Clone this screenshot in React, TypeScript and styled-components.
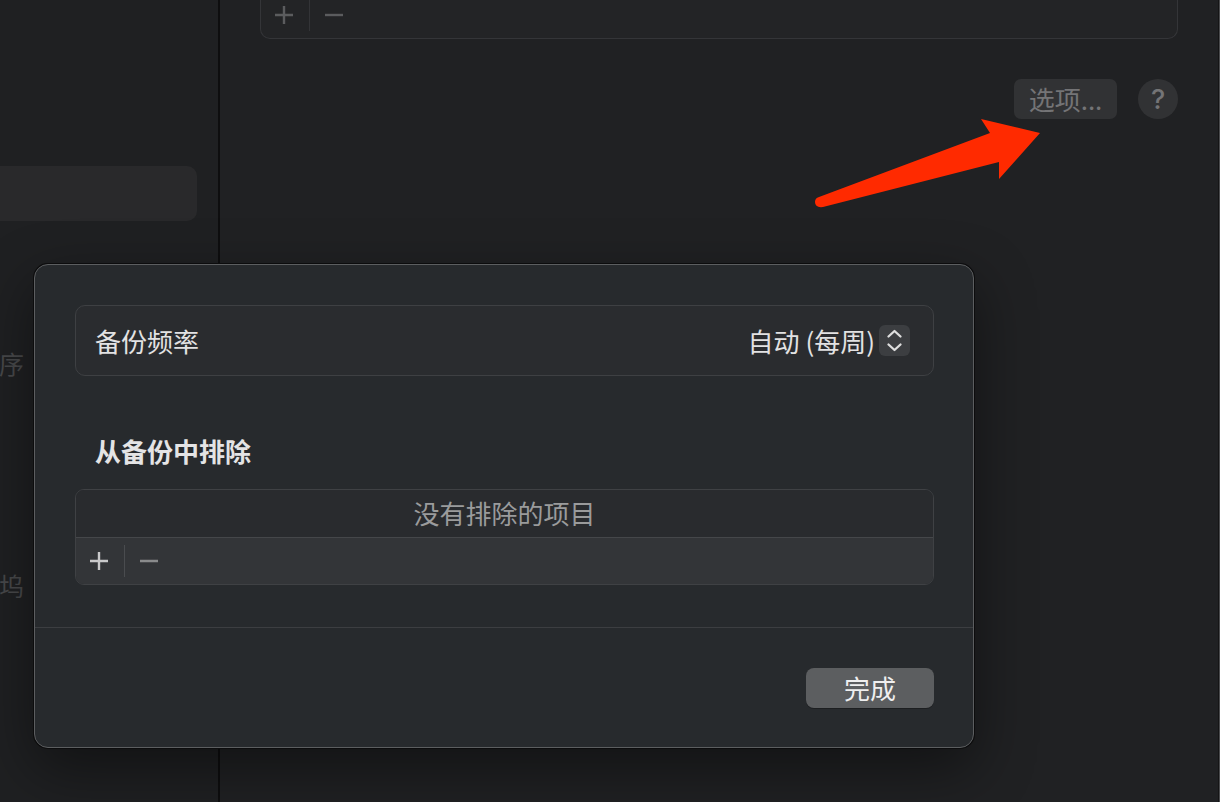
import React from "react";
import styled, { createGlobalStyle } from "styled-components";

const Global = createGlobalStyle`
  html, body { margin: 0; padding: 0; background: #1c1d1f; }
  body { font-family: "Noto Sans CJK SC", "Noto Sans", sans-serif; -webkit-font-smoothing: antialiased; }
  * { box-sizing: border-box; }
`;

const Window = styled.div`
  position: relative;
  width: 1220px;
  height: 802px;
  display: flex;
  overflow: hidden;
  background: #202123;
`;

const Sidebar = styled.div`
  width: 220px;
  flex: none;
  display: flex;
  flex-direction: column;
  padding-top: 166px;
  background: #1f2022;
  border-right: 2px solid #0e0e0f;
`;

const SelectedRow = styled.div`
  margin-left: -14px;
  width: 211px;
  height: 55px;
  border-radius: 10px;
  background: #29292b;
`;

const SideLabel = styled.div<{ $top: number }>`
  margin-top: ${(p) => p.$top}px;
  margin-left: -1px;
  height: 36px;
  white-space: nowrap;
  font-size: 25px;
  line-height: 36px;
  color: #48494b;
`;

const Main = styled.div`
  flex: 1;
  display: flex;
  flex-direction: column;
  padding: 0 41px 0 40px;
  border-right: 1px solid #4a4b4d;
  box-shadow: inset -1px 0 0 #151516;
`;

const TopCard = styled.div`
  height: 39px;
  border: 1px solid #343538;
  border-top: none;
  border-radius: 0 0 10px 10px;
  background: #232426;
  display: flex;
  align-items: flex-start;
  padding-left: 6px;
`;

const BarButton = styled.div<{ $color: string }>`
  width: 34px;
  height: 30px;
  display: flex;
  align-items: center;
  justify-content: center;
  color: ${(p) => p.$color};
`;

const BarDivider = styled.div<{ $h: number; $color: string }>`
  width: 1px;
  height: ${(p) => p.$h}px;
  background: ${(p) => p.$color};
  margin: 0 7px 0 8px;
`;

const OptionsRow = styled.div`
  margin-top: 40px;
  display: flex;
  justify-content: flex-end;
  align-items: center;
  gap: 21px;
`;

const OptionsButton = styled.div`
  width: 103px;
  height: 40px;
  border-radius: 7px;
  background: #313234;
  color: #747476;
  font-size: 26px;
  line-height: 40px;
  display: flex;
  align-items: center;
  justify-content: center;
  padding-bottom: 1px;
`;

const HelpButton = styled.div`
  width: 40px;
  height: 40px;
  border-radius: 50%;
  background: #313234;
  color: #747476;
  font-family: "Inter", "Liberation Sans", sans-serif;
  font-size: 27px;
  font-weight: 500;
  display: flex;
  align-items: center;
  justify-content: center;
`;

const ArrowLayer = styled.svg`
  position: absolute;
  left: 0;
  top: 0;
  pointer-events: none;
`;

const Dialog = styled.div`
  position: absolute;
  left: 34px;
  top: 264px;
  width: 940px;
  height: 484px;
  border-radius: 14px;
  background: #272a2d;
  border: 1px solid #5c5e60;
  box-shadow: 0 0 0 1px #0c0c0d, 0 20px 60px rgba(0, 0, 0, 0.45);
  display: flex;
  flex-direction: column;
`;

const Body = styled.div`
  padding: 40px 39px 0 40px;
  display: flex;
  flex-direction: column;
`;

const FreqCard = styled.div`
  height: 71px;
  border: 1px solid #3e4043;
  border-radius: 10px;
  background: #2a2c2f;
  display: flex;
  align-items: center;
  justify-content: space-between;
  padding: 0 23px 0 19px;
`;

const Label = styled.span`
  font-size: 26px;
  line-height: 36px;
  color: #e2e2e3;
  white-space: pre;
`;

const PopupValue = styled.div`
  display: flex;
  align-items: center;
  gap: 4px;
`;

const Stepper = styled.div`
  width: 31px;
  height: 31px;
  border-radius: 6px;
  background: #3c3e41;
  display: flex;
  align-items: center;
  justify-content: center;
`;

const Heading = styled.div`
  margin-top: 57px;
  padding-left: 20px;
  font-size: 26px;
  line-height: 36px;
  font-weight: 700;
  color: #e4e4e5;
`;

const Table = styled.div`
  margin-top: 20px;
  border: 1px solid #3f4144;
  border-radius: 9px;
  overflow: hidden;
  display: flex;
  flex-direction: column;
`;

const EmptyRow = styled.div`
  height: 48px;
  display: flex;
  align-items: center;
  justify-content: center;
  font-size: 26px;
  color: #9a9b9c;
  background: #292b2e;
  border-bottom: 1px solid #45474a;
  padding-bottom: 3px;
`;

const TableBar = styled.div`
  height: 46px;
  background: #333538;
  display: flex;
  align-items: center;
  padding-left: 6px;
`;

const FooterLine = styled.div`
  margin-top: 42px;
  height: 1px;
  background: #3c3e41;
`;

const Footer = styled.div`
  display: flex;
  justify-content: flex-end;
  padding: 40px 39px 0 0;
`;

const DoneButton = styled.div`
  width: 128px;
  height: 40px;
  border-radius: 8px;
  background: #5c5e60;
  box-shadow: 0 1px 0 rgba(0, 0, 0, 0.25);
  color: #efefef;
  font-size: 26px;
  line-height: 40px;
  display: flex;
  align-items: center;
  justify-content: center;
  padding-bottom: 1px;
`;

const PlusIcon = ({ color }: { color: string }) => (
  <svg width="20" height="20" viewBox="0 0 20 20">
    <path d="M10 1v18M1 10h18" stroke={color} strokeWidth="2.4" fill="none" />
  </svg>
);

const MinusIcon = ({ color }: { color: string }) => (
  <svg width="20" height="20" viewBox="0 0 20 20">
    <path d="M1 10h18" stroke={color} strokeWidth="2.4" fill="none" />
  </svg>
);

const Chevrons = () => (
  <svg width="31" height="31" viewBox="0 0 31 31">
    <path
      d="M9.5 11.5L15.5 6L21.5 11.5M9.5 19.5L15.5 25L21.5 19.5"
      stroke="#dedede"
      strokeWidth="2.3"
      strokeLinecap="round"
      strokeLinejoin="round"
      fill="none"
    />
  </svg>
);

export default function App() {
  return (
    <>
      <Global />
      <Window>
        <Sidebar>
          <SelectedRow />
          <SideLabel $top={124}>序</SideLabel>
          <SideLabel $top={186}>坞</SideLabel>
        </Sidebar>
        <Main>
          <TopCard>
            <BarButton $color="#5b5c5e">
              <PlusIcon color="#5b5c5e" />
            </BarButton>
            <BarDivider $h={31} $color="#333437" />
            <BarButton $color="#5b5c5e">
              <MinusIcon color="#5b5c5e" />
            </BarButton>
          </TopCard>
          <OptionsRow>
            <OptionsButton>选项...</OptionsButton>
            <HelpButton>?</HelpButton>
          </OptionsRow>
        </Main>

        <ArrowLayer width="1220" height="802" viewBox="0 0 1220 802">
          <path
            d="M819 197 L990 133 L981 119 L1040 133 L999 179 L999 162 L823 207 Q815 208 815 202 Q815 198 819 197 Z"
            fill="#ff2a00"
          />
        </ArrowLayer>

        <Dialog>
          <Body>
            <FreqCard>
              <Label>备份频率</Label>
              <PopupValue>
                <Label>{"自动 (每周)"}</Label>
                <Stepper>
                  <Chevrons />
                </Stepper>
              </PopupValue>
            </FreqCard>
            <Heading>从备份中排除</Heading>
            <Table>
              <EmptyRow>没有排除的项目</EmptyRow>
              <TableBar>
                <BarButton $color="#c9c9ca">
                  <PlusIcon color="#c9c9ca" />
                </BarButton>
                <BarDivider $h={32} $color="#4a4c4f" />
                <BarButton $color="#8a8b8c">
                  <MinusIcon color="#8a8b8c" />
                </BarButton>
              </TableBar>
            </Table>
          </Body>
          <FooterLine />
          <Footer>
            <DoneButton>完成</DoneButton>
          </Footer>
        </Dialog>
      </Window>
    </>
  );
}
